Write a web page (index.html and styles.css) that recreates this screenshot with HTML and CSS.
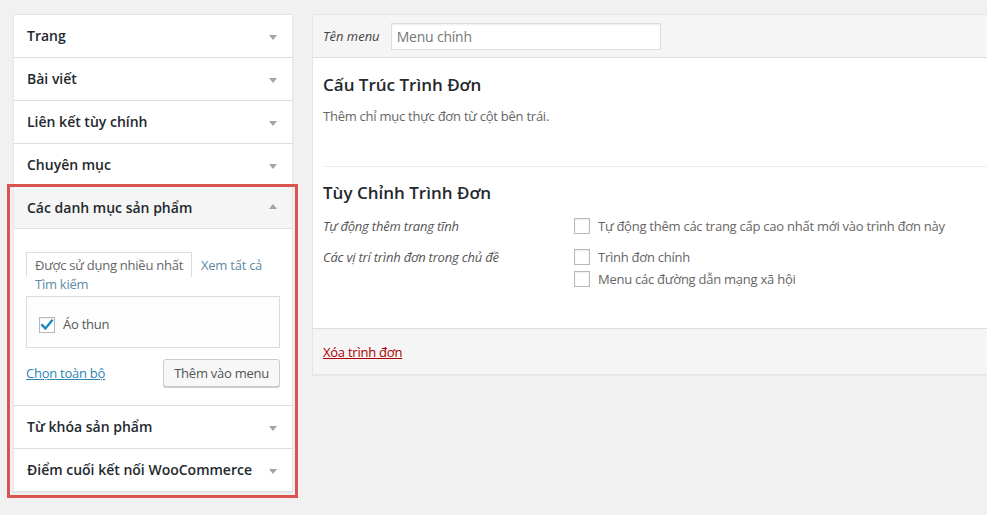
FILE: index.html
```html
<!DOCTYPE html>
<html lang="vi">
<head>
<meta charset="utf-8">
<title>Menu</title>
<link rel="stylesheet" href="styles.css">
</head>
<body>
<div class="page">
  <div class="side">
    <div class="sec"><h3 class="sec-title">Trang<span class="arrow"></span></h3></div>
    <div class="sec"><h3 class="sec-title">Bài viết<span class="arrow"></span></h3></div>
    <div class="sec"><h3 class="sec-title">Liên kết tùy chính<span class="arrow"></span></h3></div>
    <div class="sec"><h3 class="sec-title">Chuyên mục<span class="arrow"></span></h3></div>
    <div class="highlight">
      <div class="sec open">
        <h3 class="sec-title">Các danh mục sản phẩm<span class="arrow up"></span></h3>
        <div class="sec-body">
          <div class="tabs"><span class="tab active">Được sử dụng nhiều nhất</span><wbr><a class="tab" href="#">Xem tất cả</a><wbr><a class="tab" href="#">Tìm kiếm</a></div>
          <div class="tab-panel">
            <label class="item"><span class="cb checked"><svg viewBox="0 0 16 16" width="16" height="16"><path d="M3.2 8.2 L6.4 11.4 L12.8 3.6" fill="none" stroke="#1e8cbe" stroke-width="2.4" stroke-linecap="square"/></svg></span>Áo thun</label>
          </div>
          <div class="actions">
            <a class="select-all" href="#">Chọn toàn bộ</a>
            <span class="button">Thêm vào menu</span>
          </div>
        </div>
      </div>
      <div class="sec"><h3 class="sec-title">Từ khóa sản phẩm<span class="arrow"></span></h3></div>
      <div class="sec"><h3 class="sec-title">Điểm cuối kết nối WooCommerce<span class="arrow"></span></h3></div>
    </div>
  </div>

  <div class="main">
    <div class="main-head">
      <span class="name-label">Tên menu</span>
      <span class="name-input">Menu chính</span>
    </div>
    <div class="main-body">
      <h3 class="main-title">Cấu Trúc Trình Đơn</h3>
      <p class="desc">Thêm chỉ mục thực đơn từ cột bên trái.</p>
      <div class="rule"></div>
      <h3 class="main-title second">Tùy Chỉnh Trình Đơn</h3>
      <div class="setting">
        <div class="set-label">Tự động thêm trang tĩnh</div>
        <div class="set-opts">
          <div class="opt"><span class="cb"></span>Tự động thêm các trang cấp cao nhất mới vào trình đơn này</div>
        </div>
      </div>
      <div class="setting">
        <div class="set-label">Các vị trí trình đơn trong chủ đề</div>
        <div class="set-opts">
          <div class="opt"><span class="cb"></span>Trình đơn chính</div>
          <div class="opt"><span class="cb"></span>Menu các đường dẫn mạng xã hội</div>
        </div>
      </div>
    </div>
    <div class="main-foot">
      <a class="delete" href="#">Xóa trình đơn</a>
    </div>
  </div>
</div>
</body>
</html>
```

FILE: styles.css
```css
* { box-sizing: border-box; }
html, body { margin: 0; padding: 0; }
body {
  background: #f1f1f1;
  font-family: "Open Sans", "Noto Sans", sans-serif;
  font-size: 13px;
  color: #444;
  overflow: hidden;
  width: 987px;
  height: 515px;
}
.page {
  display: flex;
  align-items: flex-start;
  gap: 19px;
  padding: 14px 0 0 13px;
}
.side {
  width: 280px;
  flex: none;
  background: #fff;
  border: 1px solid #e5e5e5;
  box-shadow: 0 1px 1px rgba(0,0,0,.05);
}
.sec + .sec, .highlight { border-top: 1px solid #dedede; }
.sec-title {
  margin: 0;
  height: 42px;
  line-height: 42px;
  padding: 0 15px 0 13px;
  font-size: 14px;
  font-weight: 600;
  color: #23282d;
  display: flex;
  justify-content: space-between;
  align-items: center;
}
.arrow {
  width: 0; height: 0;
  border-left: 4px solid transparent;
  border-right: 4px solid transparent;
  border-top: 5px solid #a0a5aa;
  margin-top: 2px;
}
.arrow.up { border-top: 0; border-bottom: 5px solid #a0a5aa; margin-top: -2px; }
.highlight { position: relative; }
.highlight::after {
  content: "";
  position: absolute;
  top: -3px; left: -7px; right: -6px; bottom: -7px;
  border: 3px solid #d9534f;
  pointer-events: none;
}
.open .sec-title { background: #f5f5f5; border-bottom: 1px solid #e3e3e3; }
.sec-body { padding: 27px 12px 18px 12px; }
.tabs { line-height: 19px; font-size: 13px; margin-bottom: 2px; letter-spacing: -0.25px; }
.tab {
  padding: 3px 8px;
  border: 1px solid transparent;
  border-bottom: 0;
  color: #5f8aa6;
  text-decoration: none;
  white-space: nowrap;
}
.tab.active { border-color: #dcdcdc; background: #fff; color: #666; }
.tab-panel {
  border: 1px solid #dcdcdc;
  background: #fdfdfd;
  height: 52px;
  padding: 18px 12px 0;
}
.item { display: flex; align-items: center; line-height: 19px; color: #555; font-size: 13px; letter-spacing: -0.25px; }
.cb {
  width: 16px; height: 16px;
  border: 1px solid #b4b9be;
  background: #fff;
  box-shadow: inset 0 1px 2px rgba(0,0,0,.07);
  margin-right: 8px;
  flex: none;
  display: inline-flex;
}
.cb svg { margin: -1px; }
.actions {
  margin-top: 11px;
  display: flex;
  justify-content: space-between;
  align-items: center;
  letter-spacing: -0.25px;
}
.select-all { color: #2b86b3; text-decoration: underline; font-size: 13px; }
.button {
  height: 28px;
  line-height: 26px;
  padding: 0 10px;
  border: 1px solid #cccccc;
  background: #f7f7f7;
  border-radius: 3px;
  color: #555;
  font-size: 13px;
  box-shadow: 0 1px 0 #ccc;
}
.main {
  width: 720px;
  flex: none;
  background: #fff;
  border: 1px solid #e5e5e5;
  box-shadow: 0 1px 1px rgba(0,0,0,.04);
}
.main-head {
  height: 43px;
  background: #f5f5f5;
  border-bottom: 1px solid #dedede;
  display: flex;
  align-items: center;
  padding: 0 10px;
}
.name-label { font-style: italic; color: #444; margin-right: 11px; font-size: 13px; }
.name-input {
  width: 270px;
  height: 27px;
  line-height: 25px;
  border: 1px solid #ddd;
  background: #fff;
  box-shadow: inset 0 1px 2px rgba(0,0,0,.07);
  padding: 0 5px;
  font-size: 14px;
  color: #777;
  letter-spacing: -0.2px;
}
.main-body { padding: 0 0 39px 10px; }
.main-title { margin: 15px 0 0; font-size: 17px; line-height: 24px; font-weight: 600; color: #23282d; }
.main-title.second { margin-top: 14px; }
.desc { margin: 9px 0 0; line-height: 20px; color: #666; font-size: 13px; letter-spacing: -0.25px; }
.rule { margin-top: 40px; border-top: 1px solid #eee; }
.setting { display: flex; margin-top: 11px; }
.set-label { width: 251px; font-style: italic; color: #555; line-height: 20px; font-size: 13px; letter-spacing: -0.2px; }
.set-opts { display: flex; flex-direction: column; gap: 2px; }
.opt { display: flex; align-items: center; line-height: 20px; color: #666; font-size: 13px; letter-spacing: -0.25px; }
.main-foot {
  height: 46px;
  border-top: 1px solid #dedede;
  background: #f5f5f5;
  padding: 0 10px;
  display: flex;
  align-items: center;
}
.delete { color: #a00; text-decoration: underline; font-size: 13px; letter-spacing: -0.25px; }
```
